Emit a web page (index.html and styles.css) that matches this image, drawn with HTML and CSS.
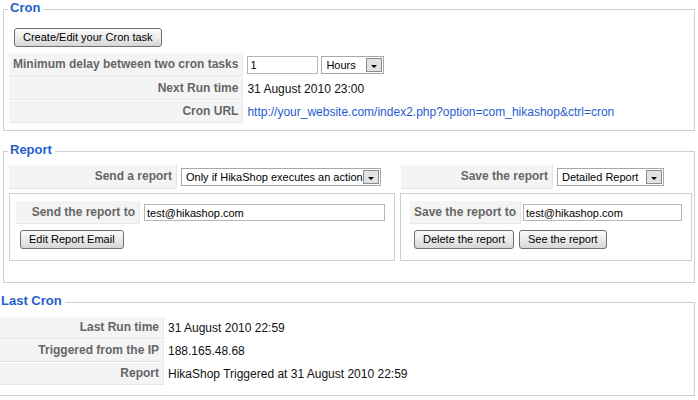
FILE: index.html
```html
<!doctype html>
<html lang="en">
  <head>
    <meta charset="UTF-8">
    <title>Cron</title>
    <link rel="stylesheet" href="styles.css">
  </head>
  <body>
    <fieldset class="adminform">
      <legend>Cron</legend>
      <div class="toolbar">
        <button class="btn">Create/Edit your Cron task</button>
      </div>
      <table class="admintable">
        <tr>
          <td class="key">Minimum delay between two cron tasks</td>
          <td class="value"><input class="field delay" type="text" value="1"><span class="select hours"><span class="label">Hours</span><span class="arrow"></span></span></td>
        </tr>
        <tr>
          <td class="key">Next Run time</td>
          <td class="value">31 August 2010 23:00</td>
        </tr>
        <tr>
          <td class="key">Cron URL</td>
          <td class="value"><a href="#">http://your_website.com/index2.php?option=com_hikashop&amp;ctrl=cron</a></td>
        </tr>
      </table>
    </fieldset>

    <fieldset class="adminform report">
      <legend>Report</legend>
      <div class="report-grid">
        <div class="report-col">
          <table class="admintable">
            <tr>
              <td class="key send-key">Send a report</td>
              <td class="value"><span class="select send"><span class="label">Only if HikaShop executes an action</span><span class="arrow"></span></span></td>
            </tr>
          </table>
          <div class="subbox left">
            <table class="admintable">
              <tr>
                <td class="key send-to-key">Send the report to</td>
                <td class="value"><input class="field email send-email" type="text" value="test@hikashop.com"></td>
              </tr>
            </table>
            <div class="buttons">
              <button class="btn">Edit Report Email</button>
            </div>
          </div>
        </div>
        <div class="report-col">
          <table class="admintable">
            <tr>
              <td class="key save-key">Save the report</td>
              <td class="value"><span class="select save"><span class="label">Detailed Report</span><span class="arrow"></span></span></td>
            </tr>
          </table>
          <div class="subbox right">
            <table class="admintable">
              <tr>
                <td class="key save-to-key">Save the report to</td>
                <td class="value tight"><input class="field email save-email" type="text" value="test@hikashop.com"></td>
              </tr>
            </table>
            <div class="buttons">
              <button class="btn">Delete the report</button>
              <button class="btn">See the report</button>
            </div>
          </div>
        </div>
      </div>
    </fieldset>

    <fieldset class="adminform last">
      <legend>Last Cron</legend>
      <table class="admintable">
        <tr>
          <td class="key last-key">Last Run time</td>
          <td class="value">31 August 2010 22:59</td>
        </tr>
        <tr>
          <td class="key last-key">Triggered from the IP</td>
          <td class="value">188.165.48.68</td>
        </tr>
        <tr>
          <td class="key last-key">Report</td>
          <td class="value">HikaShop Triggered at 31 August 2010 22:59</td>
        </tr>
      </table>
    </fieldset>
  </body>
</html>
```

FILE: styles.css
```css
html, body {
  overflow: hidden
}
body {
  background-color: #fff;
  color: #111;
  font: 12px/14px "Liberation Sans", Arial, sans-serif;
  margin: 0
}
a, a:visited {
  color: #1f5cd0;
  text-decoration: none
}
fieldset.adminform {
  border: 1px solid #cfcfcf;
  margin: 0 3px 0 3px;
  min-width: 0;
  padding: 0 4px 6px
}
fieldset.adminform legend {
  color: #1f5fcc;
  font-size: 13px;
  font-weight: bold;
  line-height: 16px;
  padding: 0 3px 3px 2px
}
fieldset.report {
  margin-top: 11px;
  padding-bottom: 21px
}
fieldset.last {
  margin: 10px 3px 0 -6px;
  padding-bottom: 9px
}
.toolbar {
  display: flex;
  padding: 9px 0 5px 6px
}
.btn {
  background: linear-gradient(#fbfbfb, #e9e9e9 55%, #d6d6d6);
  border: 1px solid #707070;
  border-radius: 3px;
  box-sizing: border-box;
  color: #000;
  font: 11px "Liberation Sans", Arial, sans-serif;
  height: 19px;
  line-height: 15px;
  padding: 0 8px
}
table.admintable {
  border-collapse: separate;
  border-spacing: 1px
}
.admintable td {
  padding: 0;
  vertical-align: middle
}
.admintable td.key {
  background-color: #f4f4f4;
  border-bottom: 1px solid #e6e6e6;
  border-right: 1px solid #e6e6e6;
  color: #666;
  font-weight: bold;
  padding: 3px 4px 4px;
  text-align: right;
  white-space: nowrap
}
.admintable td.value {
  padding: 3px;
  white-space: nowrap
}
.admintable td.tight {
  padding-left: 1px
}
.field {
  border: 1px solid #b5b5b5;
  box-sizing: border-box;
  color: #000;
  font: 11px "Liberation Sans", Arial, sans-serif;
  height: 18px;
  margin: 0;
  padding: 0 2px;
  vertical-align: middle
}
.delay {
  margin-right: 3px;
  width: 71px
}
.select {
  align-items: center;
  background-color: #fff;
  border: 1px solid #a8a8a8;
  box-sizing: border-box;
  color: #000;
  display: inline-flex;
  font-size: 11px;
  height: 18px;
  padding-left: 4px;
  vertical-align: middle
}
.select .label {
  flex: 1;
  min-width: 0;
  overflow: hidden
}
.select .arrow {
  align-items: center;
  background-color: #e2e2e2;
  border: 1px solid #8c8c8c;
  box-sizing: border-box;
  display: flex;
  flex-shrink: 0;
  height: 14px;
  justify-content: center;
  margin-right: 1px;
  width: 16px
}
.select .arrow::after {
  border-left: 3px solid transparent;
  border-right: 3px solid transparent;
  border-top: 3px solid #000;
  content: "";
  margin-top: 2px
}
.hours {
  width: 63px
}
.send {
  width: 200px
}
.save {
  width: 107px
}
.report-grid {
  display: grid;
  gap: 5px;
  grid-template-columns: 387px 1fr;
  margin-top: 3px
}
.send-key {
  width: 159px
}
.save-key {
  width: 143px
}
.subbox {
  border: 1px solid #cfcfcf;
  margin-top: 3px;
  padding: 6px 5px 11px
}
.subbox.left {
  margin-left: 1px
}
.subbox.right {
  padding-left: 8px
}
.send-to-key {
  width: 120px
}
.save-to-key {
  width: 100px
}
.email {
  height: 17px
}
.send-email {
  width: 241px
}
.save-email {
  width: 159px
}
.buttons {
  display: flex;
  gap: 5px;
  padding: 5px 0 0 5px
}
.last table.admintable {
  margin-top: 4px
}
.last-key {
  width: 155px
}
```
